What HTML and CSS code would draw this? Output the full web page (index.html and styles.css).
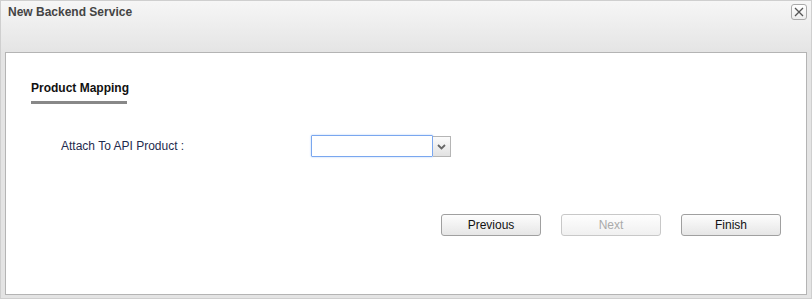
FILE: index.html
```html
<!DOCTYPE html>
<html>
<head>
<meta charset="utf-8">
<link rel="stylesheet" href="styles.css">
</head>
<body>
<div class="dialog">
  <div class="header">
    <span class="title">New Backend Service</span>
    <span class="close"><svg width="10" height="10" viewBox="0 0 10 10"><path d="M1 1L9 9M9 1L1 9" stroke="#555" stroke-width="1.3"/></svg></span>
  </div>
  <div class="panel">
    <div class="section">Product Mapping</div>
    <div class="row">
      <label class="label">Attach To API Product :</label>
      <div class="combo">
        <div class="input"></div>
        <div class="trigger"><svg width="9" height="6" viewBox="0 0 9 6"><path d="M1 1L4.5 4.5L8 1" stroke="#666" stroke-width="1.8" fill="none"/></svg></div>
      </div>
    </div>
    <div class="buttons">
      <button class="btn">Previous</button>
      <button class="btn disabled">Next</button>
      <button class="btn">Finish</button>
    </div>
  </div>
</div>
</body>
</html>
```
FILE: styles.css
```css
html, body { margin: 0; padding: 0; }
body { font-family: "Liberation Sans", Arial, sans-serif; font-size: 12px; }
.dialog {
  width: 810px; height: 297px;
  border: 1px solid #cfcfcf;
  background: linear-gradient(#f6f6f6, #e4e4e4 52px, #e4e4e4);
  display: flex; flex-direction: column;
}
.header {
  height: 51px; display: flex; justify-content: space-between; align-items: flex-start;
  padding: 0 4px 0 7px;
}
.title { font-weight: bold; font-size: 12px; color: #444; margin-top: 4px; }
.close {
  width: 14px; height: 14px; margin-top: 3px;
  border: 1px solid #aaa; border-radius: 3px; background: linear-gradient(#fff, #eee);
  display: flex; align-items: center; justify-content: center;
}
.panel {
  margin: 0 4px 0 4px; height: 241px;
  background: #fff; border: 1px solid #b4b4b4;
  padding: 0 0 0 25px;
}
.section {
  display: inline-block; margin-top: 28px; white-space: nowrap;
  font-weight: bold; font-size: 12px; color: #111;
  padding-bottom: 6px; border-bottom: 3px solid #888;
  width: 96px;
}
.row { display: flex; align-items: center; margin-top: 31px; }
.label { width: 250px; padding-left: 30px; color: #1f2b4e; font-size: 12px; }
.combo { display: flex; }
.input {
  width: 120px; height: 20px; border: 1px solid #7aa7ef;
  box-shadow: 0 0 2px #a9c8f5; border-radius: 1px;
}
.trigger {
  width: 17px; height: 19px; margin-top: 1px;
  border: 1px solid #b5b5b5; border-left: none;
  background: linear-gradient(#fbfbfb, #e2e2e2);
  display: flex; align-items: center; justify-content: center;
}
.buttons { display: flex; gap: 20px; margin-top: 57px; padding-left: 410px; }
.btn {
  width: 100px; height: 22px; padding: 0;
  font-family: "Liberation Sans", Arial, sans-serif; font-size: 12px; color: #111;
  border: 1px solid #a0a0a0; border-radius: 3px;
  background: linear-gradient(#fdfdfd, #e6e6e6);
}
.btn.disabled { color: #aaa; border-color: #c8c8c8; background: linear-gradient(#fefefe, #f0f0f0); }
```
